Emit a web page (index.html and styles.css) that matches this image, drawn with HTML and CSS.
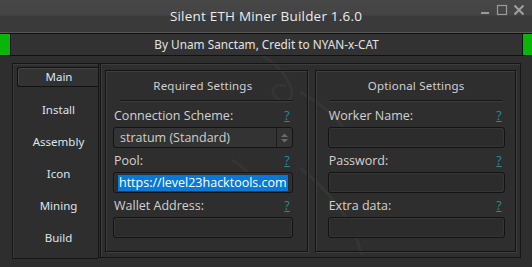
FILE: index.html
```html
<!DOCTYPE html>
<html lang="en">
<head>
    <meta charset="UTF-8">
    <title>Silent ETH Miner Builder 1.6.0</title>
    <link rel="stylesheet" href="styles.css">
</head>
<body>
    <svg class="swirl" width="532" height="267" viewBox="0 0 532 267">
        <path d="M170 38 C 220 34, 262 48, 282 72 C 298 92, 292 106, 280 100 C 268 94, 272 82, 286 86" />
        <path d="M300 92 C 325 105, 345 125, 355 145" />
        <path d="M300 168 C 328 190, 352 218, 362 255" />
        <path d="M232 160 C 240 164, 246 170, 250 176" />
    </svg>

    <div class="titlebar">
        <span class="title">Silent ETH Miner Builder 1.6.0</span>
        <div class="controls">
            <svg width="46" height="14" viewBox="0 0 46 14">
                <rect class="min" x="0" y="8" width="8" height="2" />
                <rect class="max" x="16.5" y="1.5" width="9" height="9" />
                <path class="close" d="M33.5 1.5 L42.5 10.5 M42.5 1.5 L33.5 10.5" />
            </svg>
        </div>
    </div>

    <div class="subbar">
        <div class="green"></div>
        <div class="subtitle">By Unam Sanctam, Credit to NYAN-x-CAT</div>
        <div class="green green-right"></div>
    </div>

    <div class="main">
        <div class="tabs">
            <div class="tab active">Main</div>
            <div class="tab">Install</div>
            <div class="tab">Assembly</div>
            <div class="tab">Icon</div>
            <div class="tab">Mining</div>
            <div class="tab">Build</div>
        </div>

        <div class="content">
            <div class="group group-left">
                <div class="group-title">Required Settings</div>
                <div class="separator"></div>

                <div class="field-label"><span>Connection Scheme:</span><a class="help">?</a></div>
                <div class="input select">
                    <span class="select-text">stratum (Standard)</span>
                    <span class="spinner">
                        <svg width="9" height="12" viewBox="0 0 9 12">
                            <path d="M1 5 L4.5 1.5 L8 5 Z M1 7 L4.5 10.5 L8 7 Z" />
                        </svg>
                    </span>
                </div>

                <div class="field-label"><span>Pool:</span><a class="help">?</a></div>
                <div class="input"><span class="selected-text">https://level23hacktools.com</span></div>

                <div class="field-label"><span>Wallet Address:</span><a class="help">?</a></div>
                <div class="input"></div>
            </div>

            <div class="group group-right">
                <div class="group-title">Optional Settings</div>
                <div class="separator"></div>

                <div class="field-label"><span>Worker Name:</span><a class="help">?</a></div>
                <div class="input"></div>

                <div class="field-label"><span>Password:</span><a class="help">?</a></div>
                <div class="input"></div>

                <div class="field-label"><span>Extra data:</span><a class="help">?</a></div>
                <div class="input"></div>
            </div>
        </div>
    </div>
</body>
</html>
```

FILE: styles.css
```css
body {
    margin: 0;
    width: 532px;
    height: 267px;
    overflow: hidden;
    background-color: #2e2e2e;
    font-family: "Open Sans", "DejaVu Sans", sans-serif;
    color: #d4d4d4;
    position: relative;
}
* {
    box-sizing: border-box;
}
.swirl {
    position: absolute;
    left: 0;
    top: 0;
    pointer-events: none;
}
.swirl path {
    fill: none;
    stroke: #3c3c3c;
    stroke-width: 3;
    opacity: 0.5;
}
.titlebar {
    height: 32px;
    display: flex;
    justify-content: center;
    align-items: center;
    background: linear-gradient(#474747 0, #444 15px, #3a3a3a 16px, #3a3a3a 100%);
    position: relative;
}
.title {
    font-size: 13.5px;
    color: #ececec;
    letter-spacing: 0.2px;
}
/* window buttons sit over the right end of the title bar */
.controls {
    position: absolute;
    right: 5px;
    top: 4px;
    line-height: 0;
}
.controls .min {
    fill: #9a9a9a;
}
.controls .max {
    fill: none;
    stroke: #9a9a9a;
    stroke-width: 1.2;
}
.controls .close {
    fill: none;
    stroke: #a0a0a0;
    stroke-width: 2;
}
.subbar {
    height: 24px;
    display: flex;
    border-top: 1px solid #575757;
    border-bottom: 1px solid #111;
    box-shadow: inset 0 1px 0 #111;
    background-color: #323232;
    position: relative;
}
.green {
    width: 11px;
    background-color: #08b508;
    border-right: 1px solid #111;
    margin-top: 1px;
}
.green-right {
    width: 10px;
    border-right: none;
    border-left: 1px solid #111;
}
.subtitle {
    flex: 1;
    text-align: center;
    font-family: "Noto Sans", sans-serif;
    font-size: 11.8px;
    line-height: 22px;
    color: #e2e2e2;
}
.main {
    display: flex;
    padding: 7px 11px 0 12px;
    position: relative;
}
.tabs {
    width: 86px;
    height: 196px;
    border: 1px solid #151515;
    border-right: none;
    box-shadow: inset 1px 1px 0 #3a3a3a;
    padding: 3px 0 4px 4px;
}
.tab {
    height: 20px;
    line-height: 20px;
    margin-bottom: 12px;
    text-align: center;
    font-family: "Noto Sans", sans-serif;
    font-size: 11.5px;
    color: #dbe6f0;
    padding-left: 2px;
}
.tab.active {
    margin-bottom: 13px;
    border: 1px solid #121212;
    border-right: none;
    border-radius: 3px 0 0 3px;
    line-height: 18px;
    background-color: #323232;
    box-shadow: inset 1px 1px 0 #444;
}
.content {
    width: 423px;
    height: 195px;
    border: 1px solid #151515;
    border-left: 3px double #151515;
    box-shadow: inset 1px 1px 0 #3c3c3c;
    padding: 6px 6px 5px 4px;
    display: flex;
    gap: 7px;
}
.group {
    flex: 0 0 201px;
    border: 1px solid #141414;
    box-shadow: inset 1px 1px 0 #3e3e3e, 1px 1px 0 #3e3e3e;
    display: flex;
    flex-direction: column;
}
.group-left {
    padding: 0 14px 0 7px;
}
.group-right {
    padding: 0 10px 0 12px;
}
.group-title {
    height: 29px;
    line-height: 30px;
    text-align: center;
    font-family: "Noto Sans", sans-serif;
    font-size: 11.5px;
    color: #d0d0d0;
    letter-spacing: 0.2px;
}
.separator {
    height: 1px;
    background-color: #151515;
    box-shadow: 0 1px 0 #3c3c3c;
    margin: 0 0 2px 7px;
}
.group-right .separator {
    margin: 0 3px 2px 2px;
}
.field-label {
    height: 24px;
    display: flex;
    justify-content: space-between;
    align-items: center;
    font-size: 12.5px;
    padding-left: 1px;
    color: #d2d2d2;
}
.help {
    color: #1e8f9a;
    text-decoration: underline;
    font-size: 12.5px;
    margin-right: 3px;
}
.input {
    height: 21px;
    border: 1px solid #131313;
    border-radius: 3px;
    background-color: #2c2c2c;
    box-shadow: inset 0 0 0 1px #353535;
    display: flex;
    align-items: center;
    padding: 0 4px;
}
.select {
    background-color: #333;
    padding: 0 0 0 6px;
}
.select-text {
    flex: 1;
    font-size: 12.5px;
    color: #cfcfcf;
}
.spinner {
    width: 16px;
    height: 19px;
    border-left: 1px solid #1c1c1c;
    display: flex;
    align-items: center;
    justify-content: center;
}
.spinner path {
    fill: #6a6a6a;
}
.selected-text {
    background-color: #0a78d7;
    color: #fff;
    font-size: 12.5px;
    line-height: 16px;
    padding: 0 1px;
}
```
